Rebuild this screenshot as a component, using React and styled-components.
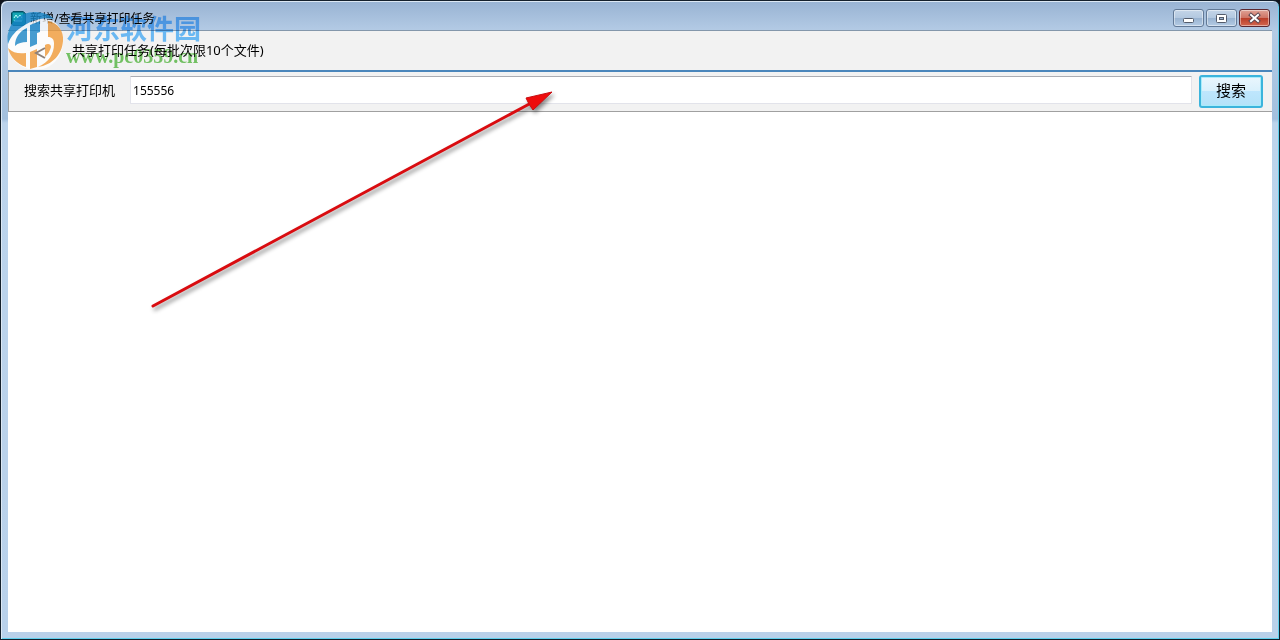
import React, { useState } from 'react';
import styled, { createGlobalStyle } from 'styled-components';


const GlobalStyle = createGlobalStyle`
  * {
    box-sizing: border-box;
  }

  body {
    margin: 0;
    background: #10141c;
    color: #000;
    font-family: "Noto Sans", "Noto Sans CJK SC", sans-serif;
    font-size: 13px;
  }
`;

const StyledWindow = styled.div`
  position: relative;
  min-height: 100vh;
  display: flex;
  flex-direction: column;
  padding: 0 7px 7px;
  border: 1px solid #14202c;
  border-radius: 7px 7px 0 0;
  background: linear-gradient( #98b3d3 0, #b4cbe5 30px, #a3c0de 118px, #bcd4ec 122px, #b9d1ea 100% );
  box-shadow: inset 1px 1px 0 #dce8f4, inset -1px -1px 0 #5fd0ee;
`;

const StyledTitleBar = styled.header`
  display: flex;
  align-items: center;
  height: 29px;
  padding: 5px 2px 0 3px;
  gap: 4px;
`;

const StyledTitle = styled.h1`
  flex: 1;
  margin: 0;
  padding-top: 2px;
  font-size: 12px;
  font-weight: 400;
  line-height: 18px;
`;

const StyledCaptionButtons = styled.div`
  display: flex;
  gap: 2px;
`;

const StyledCaptionButton = styled.button`
  display: flex;
  align-items: center;
  justify-content: center;
  width: 31px;
  height: 18px;
  padding: 0;
  border: 1px solid ${ props => props.$close ? '#5c2830' : '#627996' };
  border-radius: 3px;
  background: ${ props => props.$close
    ? 'linear-gradient( #dfa296 0, #cf7566 48%, #b93c28 50%, #d3674f 100% )'
    : 'linear-gradient( #c4d5e8 0, #b3c8e0 48%, #98b2d0 50%, #b4cbe4 100% )' };
  box-shadow: inset 0 0 0 1px rgba( 255, 255, 255, 0.45 );
`;

const StyledClient = styled.main`
  flex: 1;
  display: flex;
  flex-direction: column;
  border-top: 1px solid #8497ab;
  background: #fff;
`;

const StyledHeading = styled.div`
  display: flex;
  align-items: center;
  height: 41px;
  padding: 0 26px;
  gap: 24px;
  border-bottom: 2px solid #4a86bb;
  background: #f2f2f2;
`;

const StyledBack = styled.button`
  position: relative;
  z-index: 1;
  display: flex;
  width: 14px;
  margin-top: 4px;
  padding: 0;
  border: 0;
  background: none;
`;

const StyledSubtitle = styled.h2`
  margin: 0;
  padding-bottom: 2px;
  font-size: 13px;
  font-weight: 400;
  line-height: 20px;
`;

const StyledSearch = styled.form`
  display: flex;
  align-items: center;
  height: 40px;
  padding: 0 9px 0 15px;
  border: 1px solid #a0a0a0;
  border-width: 0 0 1px 1px;
  background: #f2f2f2;
`;

const StyledLabel = styled.label`
  margin: 0 15px 3px 0;
  line-height: 20px;
`;

const StyledInput = styled.input`
  flex: 1;
  min-width: 0;
  height: 28px;
  margin: 0 7px 3px 0;
  padding: 0 2px;
  border: 1px solid #e2e3ea;
  border-top-color: #abadb3;
  border-radius: 1px;
  outline: none;
  background: #fff;
  font-family: inherit;
  font-size: 12px;
`;

const StyledSubmit = styled.button`
  width: 64px;
  height: 33px;
  padding: 0 0 5px;
  border: 2px solid #3cb4dc;
  border-radius: 3px;
  background: linear-gradient( #eaf6fd 0, #d9f0fc 48%, #bee6fd 50%, #b4e2f8 100% );
  box-shadow: inset 0 0 0 1px #a8ecfb;
  color: #000;
  font-family: inherit;
  font-size: 15px;
`;

const StyledWatermark = styled.div`
  position: absolute;
  top: 10px;
  left: 5px;
  display: flex;
  pointer-events: none;
  mix-blend-mode: ${ props => props.$blend || 'normal' };
`;

const StyledBrand = styled.div`
  display: flex;
  flex-direction: column;
  margin-left: 60px;
`;

const StyledBrandName = styled.span`
  color: #70c2ff;
  font-size: 27px;
  font-weight: 700;
  line-height: 36px;
`;

const StyledBrandUrl = styled.span`
  color: #78cb68;
  font-family: "Liberation Serif", serif;
  font-size: 20px;
  font-weight: 700;
  line-height: 18px;
`;

const StyledArrow = styled.svg`
  position: absolute;
  top: 80px;
  left: 140px;
  pointer-events: none;
  filter: drop-shadow( 2px 3px 2px rgba( 0, 0, 0, 0.45 ) );
`;


const AppIcon = () => (
  <svg width="15" height="15" viewBox="0 0 15 15" aria-hidden="true">
    <path d="M2 .5h10l2.500 2v10l-2 2H2L.5 13V2z" fill="#087f94" stroke="#064d61" />
    <path d="M2 2h10v8H2z" fill="#15a6b3" />
    <path d="M3 7l2-3 2 3 2-3 2 3M3 10h8" fill="none" stroke="#b9fbff" />
  </svg>
);

const MinimizeIcon = () => (
  <svg width="13" height="12" viewBox="0 0 13 12" aria-hidden="true">
    <rect x="1.500" y="6.500" width="10" height="4" rx="1" fill="#fff" stroke="#535b6b" />
  </svg>
);

const MaximizeIcon = () => (
  <svg width="13" height="12" viewBox="0 0 13 12" aria-hidden="true">
    <rect x="1.500" y="2.500" width="10" height="8" rx="1" fill="#fff" stroke="#535b6b" />
    <rect x="4.500" y="5.500" width="4" height="2" fill="#9db4cf" stroke="#535b6b" />
  </svg>
);

const CloseIcon = () => (
  <svg width="13" height="12" viewBox="0 0 13 12" aria-hidden="true">
    <path d="M3 3l7 6M10 3L3 9" stroke="#5b4650" strokeWidth="4" strokeLinecap="square" />
    <path d="M3 3l7 6M10 3L3 9" stroke="#fff" strokeWidth="2" strokeLinecap="square" />
  </svg>
);

const BackIcon = () => (
  <svg width="14" height="12" viewBox="0 0 14 12" aria-hidden="true">
    <path d="M11 1L2 6l9 5" fill="none" stroke="#8d8078" strokeWidth="2" />
  </svg>
);

// blue upper half and orange lower half around a white H
const BrandLogo = () => (
  <svg width="58" height="60" viewBox="0 0 58 60" opacity="0.78" aria-hidden="true">
    <path d="M2 34C3 23 10 17 17 14l17-6 12 1c8 5 11 13 11 21 0 14-9 25-20 28H22C10 54 3 46 2 34z" fill="#fff" />
    <path d="M2 33C-1 16 11 1 29 1c8 0 15 3 19 7-9-2-21 0-29 6C10 19 5 25 2 33z" fill="#1685c7" />
    <path d="M9 35c0-9 5-15 12-18v14c-5 0-9 1-12 4z" fill="#1685c7" />
    <path d="M24 14l10-4v11l-3 1v11l-7 3z" fill="#1685c7" />
    <path d="M42 10c10 2 16 10 15 20-1 14-11 24-25 26 11-5 16-13 16-23 0-5-2-7-6-7z" fill="#f39a35" />
    <path d="M2 37c2 9 9 16 18 19V42c-7 1-13 0-18-5z" fill="#f39a35" />
    <path d="M24 41l7-3v18l-7 2z" fill="#f39a35" />
    <path d="M39 34c3-2 6-1 6 2-1 4-3 7-6 10z" fill="#f39a35" />
  </svg>
);


const App = () => {
  const [ keyword, setKeyword ] = useState( '155556' );

  return (
    <>
      <GlobalStyle />
      <StyledWindow>
        <StyledTitleBar>
          <AppIcon />
          <StyledTitle>新增/查看共享打印任务</StyledTitle>
          <StyledCaptionButtons>
            <StyledCaptionButton type="button" aria-label="最小化"><MinimizeIcon /></StyledCaptionButton>
            <StyledCaptionButton type="button" aria-label="最大化"><MaximizeIcon /></StyledCaptionButton>
            <StyledCaptionButton type="button" aria-label="关闭" $close><CloseIcon /></StyledCaptionButton>
          </StyledCaptionButtons>
        </StyledTitleBar>

        <StyledClient>
          <StyledHeading>
            <StyledBack type="button" aria-label="返回"><BackIcon /></StyledBack>
            <StyledSubtitle>共享打印任务(每批次限10个文件)</StyledSubtitle>
          </StyledHeading>
          <StyledSearch onSubmit={ e => e.preventDefault() }>
            <StyledLabel htmlFor="printer">搜索共享打印机</StyledLabel>
            <StyledInput
              id="printer"
              type="text"
              value={ keyword }
              onChange={ e => setKeyword( e.target.value ) } />
            <StyledSubmit type="submit">搜索</StyledSubmit>
          </StyledSearch>
        </StyledClient>

        <StyledWatermark>
          <BrandLogo />
        </StyledWatermark>
        <StyledWatermark $blend="multiply">
          <StyledBrand>
            <StyledBrandName>河东软件园</StyledBrandName>
            <StyledBrandUrl>www.pc0359.cn</StyledBrandUrl>
          </StyledBrand>
        </StyledWatermark>

        <StyledArrow width="420" height="240" viewBox="0 0 420 240" aria-hidden="true">
          <path d="M12 225L392 21" stroke="#d90c10" strokeWidth="3" strokeLinecap="round" />
          <path d="M411 11L385 17l3 6 4 6z" fill="#ee0c0c" stroke="#c80c10" />
        </StyledArrow>
      </StyledWindow>
    </>
  );
};

export default App;
